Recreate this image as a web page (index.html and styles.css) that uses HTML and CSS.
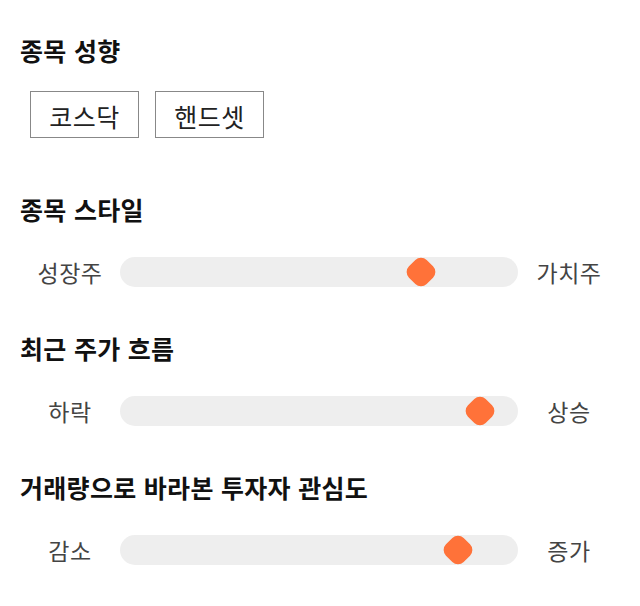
FILE: index.html
```html
<!DOCTYPE html>
<html lang="ko">
<head>
<meta charset="utf-8">
<link rel="stylesheet" href="styles.css">
</head>
<body>
<div class="page">
  <section class="section first">
    <h2 class="title">종목 성향</h2>
    <div class="chips">
      <div class="chip">코스닥</div>
      <div class="chip">핸드셋</div>
    </div>
  </section>
  <section class="section chips-after">
    <h2 class="title">종목 스타일</h2>
    <div class="slider-row">
      <span class="label">성장주</span>
      <div class="track"><span class="thumb" style="left:75.6%"></span></div>
      <span class="label">가치주</span>
    </div>
  </section>
  <section class="section">
    <h2 class="title">최근 주가 흐름</h2>
    <div class="slider-row">
      <span class="label">하락</span>
      <div class="track"><span class="thumb" style="left:90.5%"></span></div>
      <span class="label">상승</span>
    </div>
  </section>
  <section class="section">
    <h2 class="title">거래량으로 바라본 투자자 관심도</h2>
    <div class="slider-row">
      <span class="label">감소</span>
      <div class="track"><span class="thumb" style="left:85%"></span></div>
      <span class="label">증가</span>
    </div>
  </section>
</div>
</body>
</html>
```
FILE: styles.css
```css
* { box-sizing: border-box; }
html, body { margin: 0; padding: 0; background: #fff; }
body {
  font-family: "Noto Sans CJK KR", "Noto Sans", sans-serif;
  color: #111;
}
.page {
  padding: 35px 20px 0 20px;
  display: flex;
  flex-direction: column;
}
.section { margin-top: 46px; }
.section.first { margin-top: 0; }
.section.chips-after { margin-top: 56px; }
.title {
  margin: 0;
  padding-left: 0;
  font-size: 25px;
  letter-spacing: 0.3px;
  line-height: 30px;
  height: 30px;
  font-weight: 700;
  color: #111;
}
.chips {
  display: flex;
  gap: 16px;
  margin-top: 26px;
  padding-left: 10px;
}
.chip {
  width: 109px;
  height: 47px;
  border: 1px solid #888;
  display: flex;
  align-items: center;
  justify-content: center;
  font-size: 25px;
  letter-spacing: 0.5px;
  color: #222;
  padding-top: 3px;
}
.slider-row {
  display: grid;
  grid-template-columns: 100px 398px 102px;
  align-items: center;
  margin-top: 33px;
  height: 30px;
}
.label {
  text-align: center;
  font-size: 23px;
  letter-spacing: 0.5px;
  color: #444;
  line-height: 30px;
}
.track {
  position: relative;
  height: 30px;
  border-radius: 15px;
  background: #eeeeee;
}
.thumb {
  position: absolute;
  top: 50%;
  width: 25px;
  height: 25px;
  background: #ff7239;
  border-radius: 8px;
  transform: translate(-50%, -50%) rotate(45deg);
}
```
